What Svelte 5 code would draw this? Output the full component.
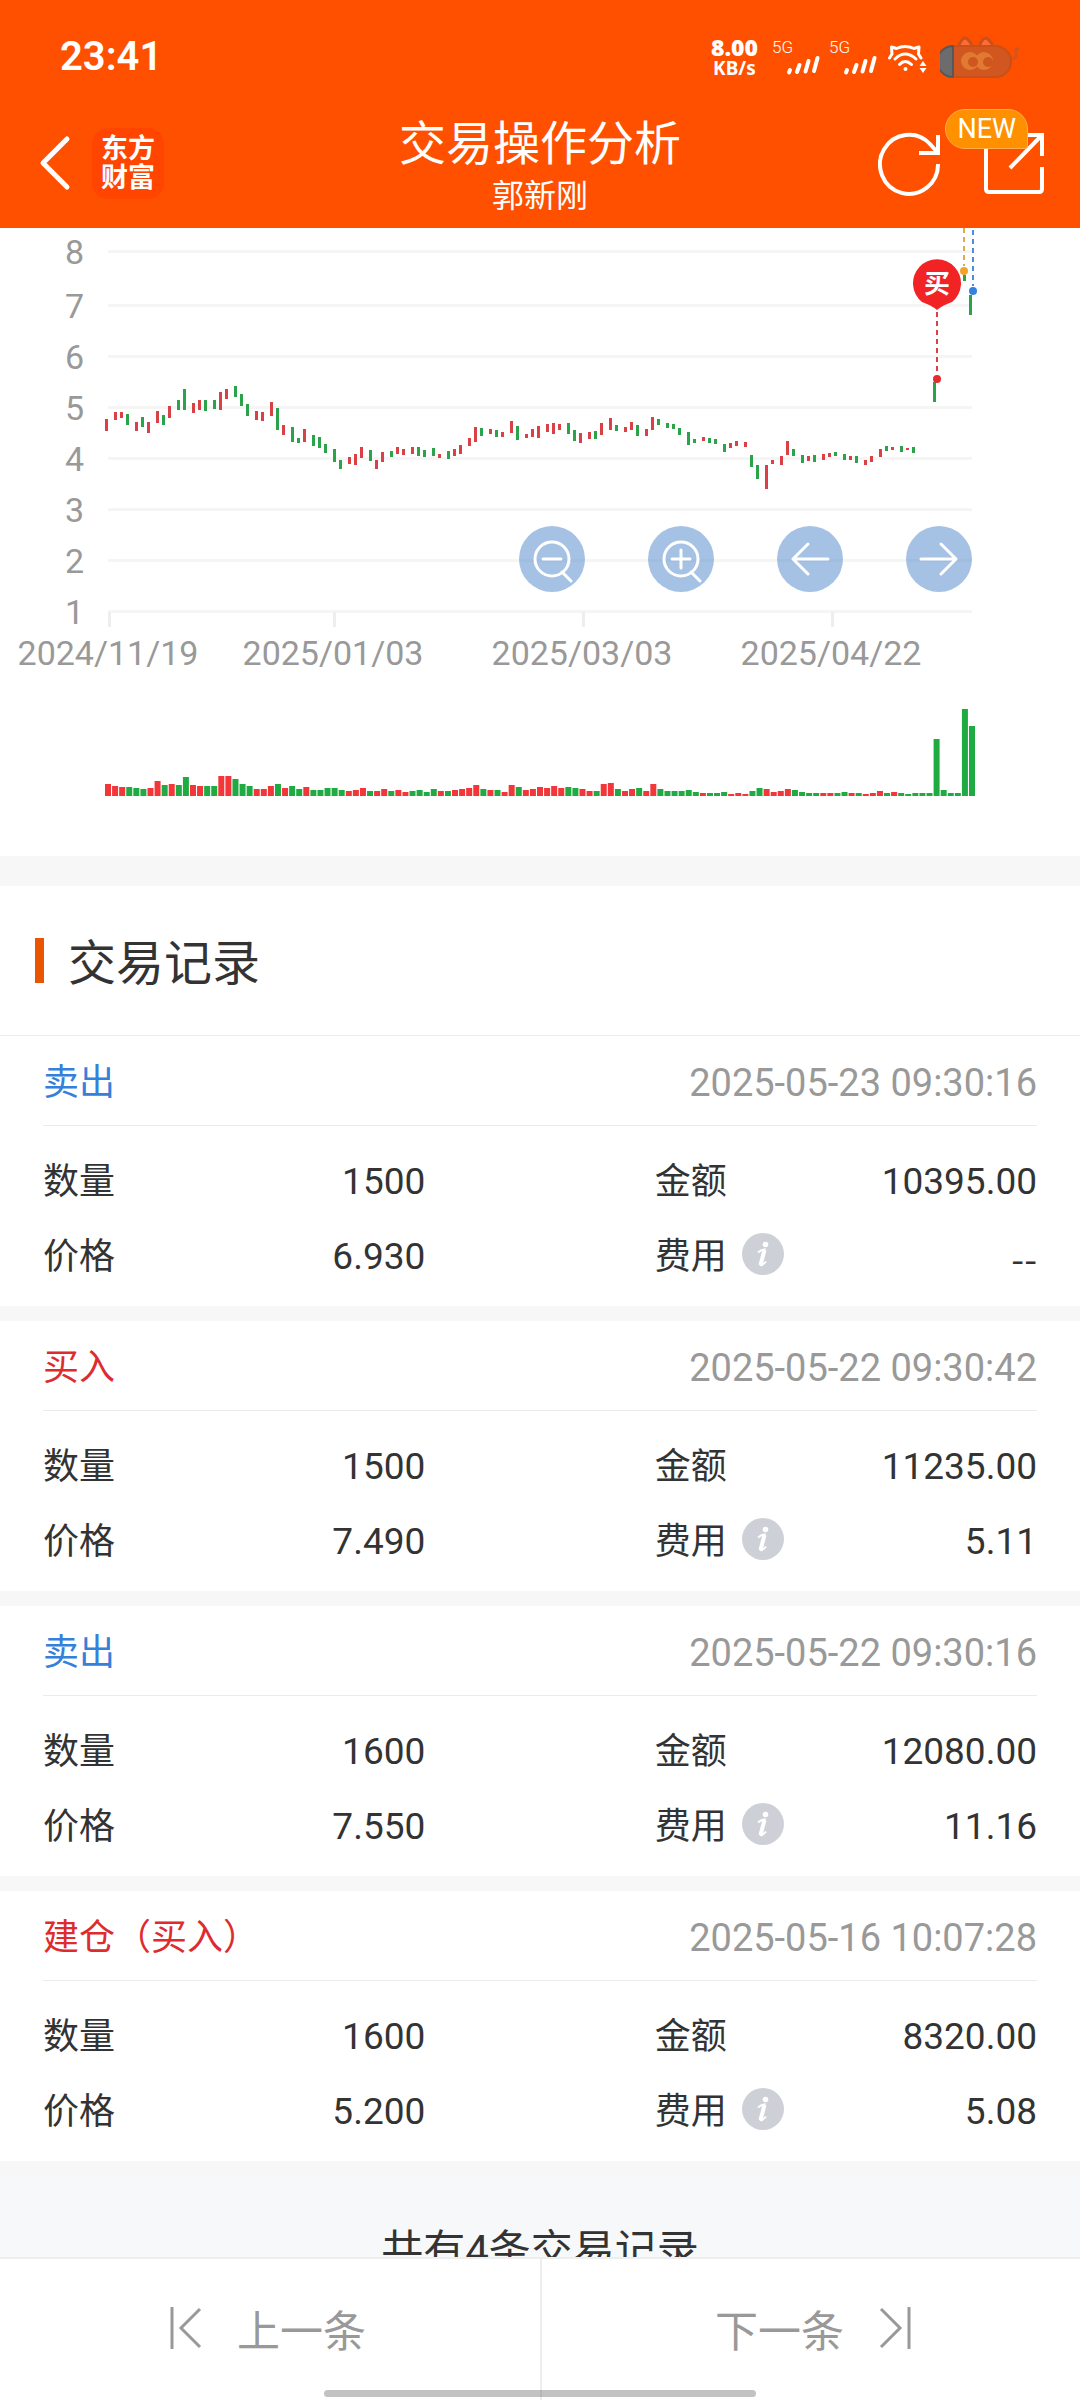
<script>
  // [x, top, bottom, colour] for every daily candle
  const candles = `105 191 203 r,114 184 192 r,120 184 190 r,126 186 197 g,135 194 203 r,141 189 199 g,147 194 205 r,156 183 195 r,162 187 197 g,168 178 190 r,177 172 182 g,183 161 182 g,192 175 185 r,198 172 182 r,204 172 183 g,213 172 181 g,219 164 182 r,225 161 171 r,234 158 169 g,240 166 178 g,246 176 188 g,255 183 192 r,261 184 193 r,270 174 188 r,276 180 202 g,282 197 207 r,291 199 214 g,297 210 215 g,303 201 214 r,312 207 218 g,318 209 220 g,324 216 225 g,333 221 234 g,339 232 241 g,348 229 236 r,354 226 237 r,360 219 230 r,369 222 233 g,375 232 241 r,381 224 234 r,390 223 229 g,396 219 226 r,402 221 227 r,411 219 226 r,417 219 228 g,423 222 229 g,432 220 228 g,438 226 230 r,447 223 231 g,453 221 228 r,459 217 226 r,468 210 218 r,474 199 214 r,480 200 208 g,489 201 206 r,495 202 209 g,501 204 209 r,510 193 205 r,516 198 212 g,525 206 210 r,531 201 209 r,537 198 210 r,546 196 204 r,552 195 206 r,558 196 202 r,567 195 206 g,573 202 213 g,579 205 215 r,588 204 211 r,594 203 211 g,600 195 207 r,609 190 202 r,615 197 203 g,624 199 204 r,630 194 202 r,636 197 208 g,645 201 208 r,651 189 202 r,657 191 197 g,666 195 200 g,672 196 201 g,678 200 207 g,687 204 217 g,693 211 215 g,702 209 213 r,708 210 215 g,714 211 216 g,723 216 224 g,729 215 220 r,735 213 218 r,744 214 219 r,750 227 239 g,756 237 251 g,765 237 261 r,771 232 236 r,780 228 237 r,786 213 227 r,792 221 228 g,801 227 235 g,807 228 233 r,813 227 234 g,822 226 232 r,828 225 229 r,834 224 228 g,843 226 232 g,849 228 232 r,855 228 235 g,864 232 237 r,870 228 234 r,879 221 229 r,885 218 223 g,891 219 222 r,900 218 224 g,906 220 222 r,912 219 225 g,933 154 174 g,963 47 53 g,969 67 87 g`
    .split(',')
    .map((row) => {
      const [x, top, bottom, tone] = row.split(' ');
      return { x: +x, y: +top, h: bottom - top, up: tone === 'r' };
    });

  // bar height followed by its colour, one per trading day
  const volumes = `12r 10r 9r 9g 8g 7g 8r 15r 11g 12r 11g 19g 11r 10r 10g 10g 20r 20r 17g 12g 10g 7r 7r 10r 12g 8r 10g 7g 9r 6g 6g 8g 8g 6g 5r 6r 8r 5g 5r 7r 5g 6r 4r 5g 6g 4g 7g 5r 5g 6r 7r 8r 11r 7g 6r 6g 4r 11r 9g 6r 7r 9r 8r 10r 8r 9g 8g 7r 5r 5g 12r 13r 7g 5r 7r 8g 5r 12r 7g 5g 5g 5g 6g 4g 3r 3g 3g 4g 2r 3r 2r 5g 8g 7r 4r 5r 7r 6g 4g 3g 3g 3r 3r 3g 4g 3r 3g 2r 3r 5r 3g 4r 3g 2g 3g 3g 3g 57g 6g 3g 3g 87g 70g`
    .split(' ')
    .map((v, i) => ({ x: 105 + i * 7.082, h: parseInt(v), up: v.endsWith('r') }));

  const levels = [8, 7, 6, 5, 4, 3, 2, 1].map((value, i) => ({
    value,
    y: i === 0 ? 22 : 25 + i * 51,
  }));

  const dates = [
    { x: 108, label: '2024/11/19' },
    { x: 333, label: '2025/01/03' },
    { x: 582, label: '2025/03/03' },
    { x: 831, label: '2025/04/22' },
  ];

  const records = [
    { kind: '卖出', sell: true, time: '2025-05-23 09:30:16', qty: '1500', amount: '10395.00', price: '6.930', fee: '--' },
    { kind: '买入', sell: false, time: '2025-05-22 09:30:42', qty: '1500', amount: '11235.00', price: '7.490', fee: '5.11' },
    { kind: '卖出', sell: true, time: '2025-05-22 09:30:16', qty: '1600', amount: '12080.00', price: '7.550', fee: '11.16' },
    { kind: '建仓（买入）', sell: false, time: '2025-05-16 10:07:28', qty: '1600', amount: '8320.00', price: '5.200', fee: '5.08' },
  ];
</script>

{#snippet signal()}
  <div class="signal">
    <span>5G</span>
    <svg width="34" height="21" viewBox="0 0 34 21" fill="none" stroke="#fff" stroke-width="4" stroke-linecap="round">
      <path d="M3 17.500L4 15M11 17L13.500 10M19.500 16.500L22.500 6M28 16L31.500 3" />
    </svg>
  </div>
{/snippet}

<div class="page">
  <header>
    <div class="status">
      <time>23:41</time>
      <div class="indicators">
        <div class="speed"><b>8.00</b><span>KB/s</span></div>
        {@render signal()}
        {@render signal()}
        <svg class="wifi" width="40" height="30" viewBox="0 0 40 30" fill="none" stroke="#fff" stroke-width="3" stroke-linecap="round" stroke-linejoin="round">
          <path d="M1.500 14L4 10L3.500 3L8.500 4.500Q17 0.500 26 4.500L31 3L30.500 10L33 14" />
          <path d="M7 15Q17 5 28 15M11.500 20.500Q17 14.500 23.500 20.500" />
          <circle cx="17.500" cy="25" r="2" fill="#fff" stroke="none" />
          <path d="M31.500 22L35 17L38.500 22ZM31.500 24L35 29L38.500 24Z" fill="#fff" stroke="none" />
        </svg>
        <svg width="80" height="42" viewBox="0 0 80 42">
          <path d="M70 22Q78 24 76 16Q75 12 78 13" fill="none" stroke="#d1561f" stroke-width="3" stroke-linecap="round" />
          <path d="M18 11Q22 2 25 2Q29 3 33 11M39 11Q42 2 46 2Q49 3 54 11" fill="#ff6c35" stroke="#cb501c" stroke-width="3" />
          <rect x="2" y="10" width="69" height="31" rx="15.500" fill="#d1561f" stroke="#c95019" stroke-width="2" />
          <path d="M13 10A15.500 15.500 0 0 0 13 41Z" fill="#6c6c6c" stroke="#55585c" stroke-width="2" />
          <circle cx="30" cy="25" r="9" fill="#e07a32" /><circle cx="44" cy="25" r="9" fill="#e07a32" />
          <circle cx="33" cy="26" r="5" fill="#cd571d" /><circle cx="48" cy="26" r="5" fill="#cd571d" />
        </svg>
      </div>
    </div>

    <div class="bar">
      <div class="side">
        <button class="icon" aria-label="返回">
          <svg width="36" height="56" viewBox="0 0 36 56" fill="none" stroke="#fff" stroke-width="5" stroke-linecap="round" stroke-linejoin="round">
            <path d="M31 4L7 28L31 52" />
          </svg>
        </button>
        <div class="brand">东方<br />财富</div>
      </div>
      <div class="heading">
        <h1>交易操作分析</h1>
        <p>郭新刚</p>
      </div>
      <div class="side end">
        <button class="icon" aria-label="刷新">
          <svg width="64" height="66" viewBox="0 0 64 66" fill="none" stroke="#fff" stroke-width="4">
            <path d="M60 34A29 29.500 0 1 1 52 14L60 23" />
            <path d="M60 5V23H41" />
          </svg>
        </button>
        <button class="icon share" aria-label="分享">
          <svg width="60" height="66" viewBox="1 0 60 66" fill="none" stroke="#fff" stroke-width="4">
            <path d="M20 5H3V59Q3 62 6 62H56Q59 62 59 59V37" />
            <path d="M42 5H59V26M59 5L27 38" />
          </svg>
          <span class="badge">NEW</span>
        </button>
      </div>
    </div>
  </header>

  <main>
    <section class="chart">
      <svg viewBox="0 0 1080 628" role="img" aria-label="价格与成交量走势">
        {#each levels as l}
          <rect x="108" y={l.y} width="864" height="3" fill="#f5f5f5" />
          <text x="84" y={l.y + 14} text-anchor="end">{l.value}</text>
        {/each}
        {#each dates as d}
          <rect x={d.x} y="384" width="3" height="15" fill="#eee" />
          <text x={d.x} y="437" text-anchor="middle">{d.label}</text>
        {/each}
        {#each candles as c}
          <rect x={c.x} y={c.y} width="3" height={c.h} fill={c.up ? '#d94146' : '#2ba34a'} />
        {/each}
        {#each volumes as v}
          <rect x={v.x} y={568 - v.h} width="6" height={v.h} fill={v.up ? '#f23639' : '#20ab42'} />
        {/each}
        <g fill="none" stroke-width="2" stroke-dasharray="5 4">
          <path d="M964 0V38" stroke="#dfaa50" />
          <path d="M973 2V58" stroke="#4d8ed8" />
          <path d="M937 84V146" stroke="#d94146" />
        </g>
        <circle cx="964" cy="43" r="4" fill="#efa42b" />
        <circle cx="973" cy="63" r="4" fill="#3482e0" />
        <circle cx="937" cy="151" r="4" fill="#e62a2f" />
        <path d="M937 82Q931 77 922 74A24 24 0 1 1 952 74Q943 77 937 82Z" fill="#f22325" />
        <text class="pin" x="937" y="65" text-anchor="middle">买</text>
      </svg>
      <div class="tools">
        <button aria-label="缩小">
          <svg viewBox="0 0 66 66"><circle cx="33" cy="33" r="17" /><path d="M24 33H42M43 46L52 55" /></svg>
        </button>
        <button aria-label="放大">
          <svg viewBox="0 0 66 66"><circle cx="33" cy="33" r="17" /><path d="M24 33H42M33 24V42M43 46L52 55" /></svg>
        </button>
        <button aria-label="向左">
          <svg viewBox="0 0 66 66"><path d="M51 33H16M31 18L16 33L31 48" /></svg>
        </button>
        <button aria-label="向右">
          <svg viewBox="0 0 66 66"><path d="M15 33H50M35 18L50 33L35 48" /></svg>
        </button>
      </div>
    </section>

    <section class="records">
      <h2>交易记录</h2>
      {#each records as r}
        <article>
          <div class="top">
            <h3 class:sell={r.sell}>{r.kind}</h3>
            <time>{r.time}</time>
          </div>
          <dl>
            <div><dt>数量</dt><dd>{r.qty}</dd></div>
            <div class="right"><dt>金额</dt><dd>{r.amount}</dd></div>
            <div><dt>价格</dt><dd>{r.price}</dd></div>
            <div class="right">
              <dt>
                费用
                <button class="info" aria-label="费用说明">
                  <svg width="42" height="42" viewBox="0 0 42 42">
                    <circle cx="21" cy="21" r="21" fill="#cdd0d6" />
                    <circle cx="23.500" cy="11.500" r="2.800" fill="#fff" />
                    <path d="M16 19.500Q19 17 22.500 16.500L18.500 30.500Q18 33 20 32Q22 31 24 28.500" fill="none" stroke="#fff" stroke-width="2" />
                    <path d="M22.500 17L18.500 32" stroke="#fff" stroke-width="4" />
                  </svg>
                </button>
              </dt>
              <dd class:none={r.fee === '--'}>{r.fee}</dd>
            </div>
          </dl>
        </article>
      {/each}
      <p class="total">共有4条交易记录</p>
    </section>
  </main>

  <nav>
    <button>
      <svg width="34" height="44" viewBox="0 0 34 44"><path d="M3 1V43M31 3L12 22L31 41" /></svg>
      上一条
    </button>
    <button>
      下一条
      <svg width="34" height="44" viewBox="0 0 34 44"><path d="M31 1V43M3 3L22 22L3 41" /></svg>
    </button>
    <i class="home"></i>
  </nav>
</div>

<style>
  :global(body) {
    margin: 0;
  }
  .page {
    display: flex;
    flex-direction: column;
    height: 100vh;
    background: #fff;
    color: #333;
    font-family: Roboto, 'Noto Sans CJK SC', sans-serif;
  }
  h1, h2, h3, p, dl, dd {
    margin: 0;
    font-weight: 400;
  }
  button {
    padding: 0;
    border: 0;
    background: none;
    color: inherit;
    font: inherit;
  }
  svg {
    display: block;
  }

  header {
    flex: none;
    background: #ff5000;
    color: #fff;
  }
  .status {
    display: flex;
    justify-content: space-between;
    align-items: center;
    height: 110px;
    padding: 2px 60px 0;
  }
  .status time {
    font-size: 40px;
    font-weight: 600;
    line-height: 48px;
  }
  .indicators {
    display: flex;
    align-items: center;
    gap: 12px;
  }
  .speed {
    display: flex;
    flex-direction: column;
    align-items: center;
    margin-right: 2px;
    font: 700 19px/20px 'Noto Sans', sans-serif;
  }
  .speed b {
    font-size: 23px;
    line-height: 22px;
  }
  .signal {
    display: flex;
    flex-direction: column;
    width: 48px;
    font-size: 17px;
    font-weight: 300;
    line-height: 16px;
  }
  .signal + .signal {
    margin-left: -3px;
  }
  .signal svg {
    align-self: flex-end;
  }
  .wifi {
    margin: 4px 0 0 -1px;
  }
  .bar {
    display: grid;
    grid-template-columns: 1fr auto 1fr;
    height: 116px;
    padding: 0 36px;
  }
  .side {
    display: flex;
    align-items: center;
    gap: 20px;
    height: 102px;
  }
  .end {
    justify-content: flex-end;
    gap: 42px;
  }
  .brand {
    padding: 7px 9px 6px;
    border-radius: 16px;
    background: #ff4500;
    font-size: 27px;
    font-weight: 700;
    line-height: 29px;
  }
  .heading {
    padding-top: 2px;
    text-align: center;
  }
  h1 {
    font-size: 47px;
    line-height: 60px;
  }
  .heading p {
    font-size: 32px;
    line-height: 44px;
  }
  .share {
    position: relative;
  }
  .badge {
    position: absolute;
    top: -21px;
    right: 16px;
    padding: 0 11px;
    border: 1px solid #ffad4a;
    border-radius: 20px 20px 3px 20px;
    background: #ff9100;
    font-size: 27px;
    line-height: 38px;
  }

  main {
    flex: 1;
    min-height: 0;
    overflow: hidden;
    background: #f6f8fa;
  }
  .chart {
    position: relative;
    background: #fff;
  }
  .chart text {
    fill: #999;
    font-size: 34px;
  }
  .chart .pin {
    fill: #fff;
    font-size: 26px;
    font-weight: 700;
  }
  .tools {
    position: absolute;
    top: 298px;
    right: 10%;
    display: flex;
    gap: 63px;
  }
  .tools button {
    width: 66px;
    height: 66px;
    border-radius: 50%;
    background: rgba(75, 134, 201, 0.5);
  }
  .tools svg {
    fill: none;
    stroke: #fff;
    stroke-width: 3;
    stroke-linecap: round;
    stroke-linejoin: round;
  }

  .records {
    border-top: 30px solid #f7f7f7;
  }
  h2 {
    display: flex;
    align-items: flex-start;
    gap: 24px;
    padding: 42px 35px 35px;
    border-bottom: 1px solid #ebebeb;
    background: #fff;
    font-size: 48px;
    line-height: 72px;
  }
  h2::before {
    content: '';
    width: 9px;
    height: 45px;
    margin-top: 10px;
    background: #ea5504;
  }
  article {
    padding: 0 43px;
    border-bottom: 15px solid #f7f7f7;
    background: #fff;
  }
  .top {
    display: flex;
    justify-content: space-between;
    align-items: center;
    height: 85px;
    padding-top: 4px;
    border-bottom: 1px solid #ebebeb;
  }
  h3, dt {
    font-size: 36px;
    line-height: 54px;
  }
  h3 {
    color: #dd2b2e;
  }
  .sell {
    color: #3580da;
  }
  .top time {
    color: #999;
    font-size: 38px;
  }
  dl {
    display: grid;
    grid-template-columns: 5fr 3fr 5fr;
    padding: 18px 0 12px;
  }
  dl div {
    display: flex;
    justify-content: space-between;
    align-items: center;
    height: 75px;
  }
  .right {
    grid-column: 3;
  }
  dt {
    display: flex;
    align-items: center;
    gap: 15px;
  }
  .info {
    margin-bottom: 5px;
  }
  dd {
    font-size: 37px;
    line-height: 54px;
  }
  .none {
    font-family: 'Noto Sans CJK SC', sans-serif;
  }
  .total {
    padding: 45px 0;
    font-size: 42px;
    line-height: 60px;
    text-align: center;
  }

  nav {
    position: relative;
    flex: none;
    display: grid;
    grid-template-columns: 1fr 1fr;
    height: 141px;
    border-top: 2px solid #eee;
    background: #fff;
  }
  nav button {
    display: flex;
    justify-content: center;
    align-items: center;
    gap: 34px;
    padding: 0 5px 4px 0;
    color: #999;
    font-size: 43px;
  }
  nav button + button {
    padding: 0 0 4px 5px;
    border-left: 2px solid #eee;
  }
  nav svg {
    fill: none;
    stroke: #999;
    stroke-width: 3;
  }
  .home {
    position: absolute;
    bottom: 3px;
    left: 30%;
    width: 40%;
    height: 7px;
    border-radius: 4px;
    background: rgba(0, 0, 0, 0.24);
  }
</style>
